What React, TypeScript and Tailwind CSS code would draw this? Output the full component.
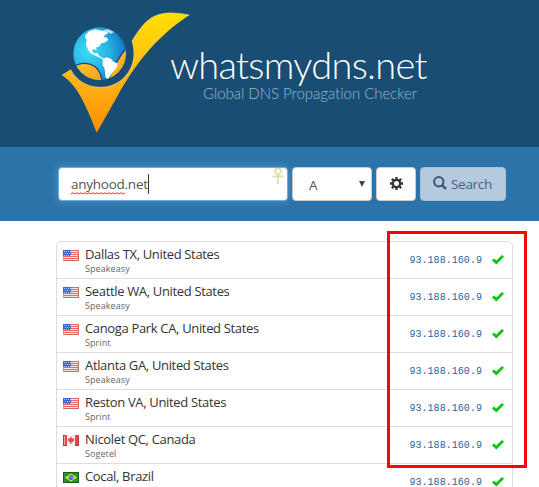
import React from "react";

type Country = "us" | "ca" | "br";

const servers: { place: string; host: string; flag: Country }[] = [
  { place: "Dallas TX, United States", host: "Speakeasy", flag: "us" },
  { place: "Seattle WA, United States", host: "Speakeasy", flag: "us" },
  { place: "Canoga Park CA, United States", host: "Sprint", flag: "us" },
  { place: "Atlanta GA, United States", host: "Speakeasy", flag: "us" },
  { place: "Reston VA, United States", host: "Sprint", flag: "us" },
  { place: "Nicolet QC, Canada", host: "Sogetel", flag: "ca" },
  { place: "Cocal, Brazil", host: "", flag: "br" },
];

function Logo() {
  return (
    <svg className="h-[145px] w-[150px] shrink-0" viewBox="0 0 450 435">
      <defs>
        <linearGradient id="tick" x1="0" y1="0" x2="0" y2="1">
          <stop offset="0" stopColor="#ffe000" />
          <stop offset="0.5" stopColor="#ffb91c" />
          <stop offset="1" stopColor="#ff8c00" />
        </linearGradient>
        <radialGradient id="sea" cx="0.3" cy="0.45" r="0.75">
          <stop offset="0" stopColor="#3fdcf8" />
          <stop offset="0.5" stopColor="#28b4e6" />
          <stop offset="1" stopColor="#0a6cb8" />
        </radialGradient>
        <linearGradient id="inner" x1="0" y1="0" x2="1" y2="1">
          <stop offset="0" stopColor="#ffc42e" />
          <stop offset="1" stopColor="#f5a01c" />
        </linearGradient>
        <clipPath id="globe">
          <circle cx="149" cy="161" r="79" />
        </clipPath>
      </defs>
      <path
        d="M36 226L62 209C80 242 112 262 152 262C208 262 252 216 252 160C252 146 249 134 246 123C290 50 320 26 418 45C335 99 262 178 202 289L140 398C112 325 82 254 36 226Z"
        fill="url(#tick)"
      />
      <path d="M36 226L62 209C80 242 112 262 152 262C208 262 252 216 252 160C252 146 249 134 246 123C290 50 320 26 418 45" fill="none" stroke="#ffe9a0" strokeWidth="2" opacity="0.8" />
      <circle cx="149" cy="161" r="79" fill="url(#sea)" />
      <g clipPath="url(#globe)">
        <path d="M66 204C96 180 149 184 157 245L120 250L76 220Z" fill="url(#inner)" stroke="#154b78" strokeWidth="4" />
        <path d="M235 140C215 156 196 190 175 240L220 240L240 190Z" fill="url(#inner)" stroke="#154b78" strokeWidth="4" />
        <path
          d="M106 105L117 94L135 88L149 91L166 94L176 99L165 105L160 113L169 111L175 120L163 128L154 130L148 139L138 143L140 151L132 148L126 151L131 160L143 160L148 168L158 173L165 180L158 177L145 171L133 166L121 159L113 148L108 134L110 119L105 112Z"
          fill="#fff"
        />
        <path d="M158 177L170 172L184 177L190 185L203 190L201 202L189 215L180 229L174 240L166 230L164 207L158 194Z" fill="#fff" />
        <path d="M158 91L175 88L192 96L184 101L174 97Z" fill="#fff" opacity="0.75" />
      </g>
    </svg>
  );
}

function Flag({ country }: { country: Country }) {
  return (
    <svg className="h-[11px] w-4 shrink-0" viewBox="0 0 16 11" shapeRendering="crispEdges">
      {country === "us" && (
        <>
          <rect width="16" height="11" fill="#f7e4df" />
          <path d="M0 .5h16M0 2.5h16M0 4.5h16M0 6.5h16M0 8.5h16" stroke="#f26565" />
          <path d="M0 10.5h16M15.5 0v11" stroke="#c66c5c" />
          <path d="M.5 0v11" stroke="#d79288" />
          <rect width="8" height="6" fill="#3b68cf" />
          <path d="M1 1.5h7M2 3.5h6M1 5.5h7" stroke="#adc4fa" strokeDasharray="1 1" />
        </>
      )}
      {country === "ca" && (
        <>
          <rect width="16" height="11" fill="#f3eeee" />
          <rect width="4" height="11" fill="#de4b4b" />
          <rect x="12" width="4" height="11" fill="#de4b4b" />
          <path d="M.5 0v11M15.5 0v11M0 10.5h4M12 10.5h4" stroke="#b83c3c" />
          <path d="M1.5 1v9" stroke="#f0a0a0" />
          <path d="M8 1.5L9.2 3.5L11.5 3.5L10.8 6L9 7.4L8.4 7.4L8.4 9L7.6 9L7.6 7.4L7 7.4L5.2 6L4.5 3.5L6.8 3.5Z" fill="#e34b4b" shapeRendering="auto" />
        </>
      )}
      {country === "br" && (
        <>
          <rect width="16" height="11" fill="#105f14" />
          <rect x="1" y="1" width="14" height="9" fill="#2b9138" />
          <path d="M8 1.5L14 5.5L8 9.5L2 5.5Z" fill="#e9e43c" shapeRendering="auto" />
          <circle cx="8" cy="5.5" r="2.5" fill="#3267c5" shapeRendering="auto" />
          <path d="M6 5Q8 4.5 10 6.3" fill="none" stroke="#b8d2f2" strokeWidth=".7" shapeRendering="auto" />
        </>
      )}
    </svg>
  );
}

function Check() {
  return (
    <svg className="h-[10px] w-3 shrink-0" viewBox="0 0 12 10">
      <path d="M0 5.4L2 3.6L4.3 5.5L10 0L12 1.8L4.4 9.6Z" fill="#0ac70a" />
    </svg>
  );
}

export default function App() {
  return (
    <div className="relative h-[487px] w-[539px] overflow-hidden bg-white font-['Open_Sans','Noto_Sans',sans-serif] text-[#333]">
      <header className="flex h-[147px] bg-[#194d73] pl-[50px]">
        <Logo />
        <div className="-ml-[30px] pt-[43px] font-[Lato,sans-serif] font-light whitespace-nowrap text-white">
          <div className="text-[38px] leading-[42px] tracking-[-0.7px]">whatsmydns.net</div>
          <div className="-mt-[1px] pl-[33px] text-[15px] leading-[18px] tracking-[-0.02px] text-[#9cbad0]">Global DNS Propagation Checker</div>
        </div>
      </header>

      <div className="flex h-[74px] gap-1 bg-[#2b73a8] pt-5 pl-[58px]">
        <div className="relative flex h-[34px] w-[230px] items-center rounded-[4px] border border-[#66afe9] bg-white pl-3 text-[13.5px] text-[#555] shadow-[0_0_8px_rgba(102,175,233,0.6)]">
          <span className="relative border-r border-[#333] pt-px leading-[19px] tracking-[-0.25px]">
            anyhood.net
            <svg className="absolute bottom-[-1px] left-0 h-[3px] w-[54px]" viewBox="0 0 54 3">
              <path d="M0 2L2 .7L4 2L6 .7L8 2L10 .7L12 2L14 .7L16 2L18 .7L20 2L22 .7L24 2L26 .7L28 2L30 .7L32 2L34 .7L36 2L38 .7L40 2L42 .7L44 2L46 .7L48 2L50 .7L52 2L54 .7" fill="none" stroke="#f33" />
            </svg>
          </span>
          <svg className="absolute top-0 right-[3px] h-[17px] w-3" viewBox="0 0 12 17">
            <path d="M6 7.5C3.8 5.5 3 4.2 3 3A3 2.5 0 0 1 9 3C9 4.2 8.2 5.5 6 7.5V16M.5 8.5H11.5" fill="none" stroke="#dde1b4" strokeWidth="2" />
          </svg>
        </div>
        <div className="flex h-[34px] w-20 items-center justify-between rounded-[4px] border border-[#ccc] bg-white pr-[6px] pl-4 text-[13.5px] text-[#555]">
          <span className="pt-[2px]">A</span>
          <svg className="h-[6px] w-[6px]" viewBox="0 0 6 6">
            <path d="M0 0H6L3 6Z" fill="#444" />
          </svg>
        </div>
        <div className="flex h-[34px] w-10 items-center justify-center rounded-[4px] border border-[#ccc] bg-white">
          <svg className="-mt-[2px] h-[13px] w-[13px]" viewBox="0 0 14 14">
            <circle cx="7" cy="7" r="3.9" fill="none" stroke="#333" strokeWidth="2.4" />
            <path d="M7 0V2.8M7 11.2V14M0 7H2.8M11.2 7H14M2 2L4 4M10 10L12 12M2 12L4 10M10 4L12 2" stroke="#333" strokeWidth="2.5" />
          </svg>
        </div>
        <div className="flex h-[34px] w-[86px] items-center rounded-[4px] border border-[#a5bfd5] bg-[#b4cadf] pl-3 text-[13.5px] tracking-[-0.3px] text-[#47607a]">
          <svg className="-mt-[3px] mr-1 h-[14px] w-[14px] shrink-0" viewBox="0 0 14 14">
            <circle cx="5.8" cy="5.8" r="4.7" fill="none" stroke="#3e556e" strokeWidth="2" />
            <path d="M9 9L13 13" stroke="#3e556e" strokeWidth="2.4" />
          </svg>
          Search
        </div>
      </div>

      <main className="mt-5 ml-14 h-[300px] w-[457px] rounded-t-[5px] border border-[#ddd]">
        {servers.map((s) => (
          <div key={s.place} className="flex h-[37px] border-b border-[#ddd] pl-[6px]">
            <div className="pt-2">
              <Flag country={s.flag} />
            </div>
            <div className="ml-[6px] flex-1 whitespace-nowrap">
              <div className="pt-[3px] text-[13px] leading-[19px] tracking-[-0.34px]">{s.place}</div>
              <div className="text-[9px] leading-[10px] tracking-[0.08px] text-[#666]">{s.host}</div>
            </div>
            <div className="flex items-center pr-2">
              <span className="mr-[10px] font-['Liberation_Mono',monospace] text-[10px] tracking-[0.05px] text-[#28649a]">93.188.160.9</span>
              <Check />
            </div>
          </div>
        ))}
      </main>

      <div className="absolute top-[231px] left-[387px] h-[237px] w-[140px] border-[3px] border-[#fb0408]" />
    </div>
  );
}
